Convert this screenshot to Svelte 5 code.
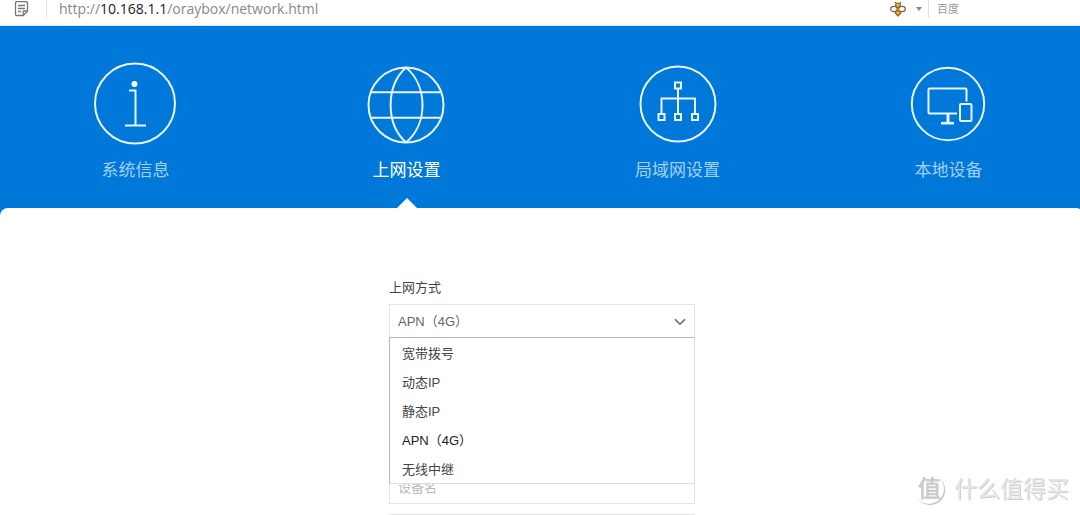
<script lang="ts">
	const tabs = [
		{ id: 'info', label: '系统信息' },
		{ id: 'wan', label: '上网设置' },
		{ id: 'lan', label: '局域网设置' },
		{ id: 'device', label: '本地设备' }
	];

	const modes = ['宽带拨号', '动态IP', '静态IP', 'APN（4G）', '无线中继'];

	let active = $state('wan');
	let mode = $state('APN（4G）');
	let open = $state(true);
	let deviceName = $state('');
	let apn = $state('');

	function pick(value: string) {
		mode = value;
		open = false;
	}

	function toggle(e: MouseEvent) {
		e.preventDefault();
		open = !open;
	}
</script>

<div class="page">
	<div class="address-bar">
		<svg class="doc" width="16" height="18" viewBox="0 0 16 18" fill="none" stroke="#777" stroke-width="1.3">
			<path d="M2.500 1.700h10q1 0 1 1v8.300l-4.300 4.500H2.500q-1 0-1-1V2.700q0-1 1-1z" />
			<path d="M13.500 11H10q-.8 0-.8.8v3.700M4 5.500h7M4 8.500h7M4 11.500h3" />
		</svg>
		<span class="url">http://<b>10.168.1.1</b>/oraybox/network.html</span>
		<svg class="bee" width="16" height="16" viewBox="0 0 16 16" fill="none" stroke="#8a5a3c" stroke-width="1.2">
			<path d="M5 1 6.500 3M11 1 9.500 3" />
			<circle cx="8" cy="4.300" r="2.300" fill="#fb0" />
			<path d="M5 10h6q0 2.500-3 5-3-2.500-3-5z" fill="#fb0" />
			<ellipse cx="4" cy="8" rx="3.300" ry="2.700" fill="#fff" />
			<ellipse cx="12" cy="8" rx="3.300" ry="2.700" fill="#fff" />
		</svg>
		<span class="caret"></span>
		<span class="engine">百度</span>
	</div>

	<nav class="tabs">
		{#each tabs as tab (tab.id)}
			<button class="tab" class:active={active === tab.id} onclick={() => (active = tab.id)}>
				<svg width="84" height="84" viewBox="0 0 84 84" fill="none" stroke="#e8f4ff" stroke-width="2">
					{#if tab.id === 'info'}
						<circle cx="41" cy="41.500" r="40" />
						<circle cx="40.500" cy="22" r="3" fill="#fff" stroke="none" />
						<path d="M35 28.500h6.500V63.500M31 63.500h21" />
					{:else if tab.id === 'wan'}
						<circle cx="41" cy="43" r="37.500" />
						<path d="M41 5.500C20.500 24 20.500 62 41 80.500M41 5.500C63 24 63 62 41 80.500M6.500 30.200h69M6.500 55.700h69" />
					{:else if tab.id === 'lan'}
						<circle cx="42" cy="42" r="37.500" />
						<path d="M39 20.500h6v6h-6zM22.500 52h6v6h-6zM39 52h6v6h-6zM56 52h6v6h-6z" />
						<path d="M42 27v25M25.500 52V36.500H59V52" />
					{:else}
						<circle cx="41" cy="42" r="36.200" />
						<path d="M59.500 39.500V27.500q0-1-1-1H22.500q-1 0-1 1V50.500q0 1 1 1H50" />
						<path d="M41 51.500v9" stroke-width="3" />
						<path d="M34 61.200h13" stroke-width="2.600" />
						<rect x="53" y="42" width="11.500" height="17" rx="1" />
					{/if}
				</svg>
				<span>{tab.label}</span>
			</button>
		{/each}
	</nav>

	<main class="panel">
		<form class="form">
			<label class="title" for="mode">上网方式</label>
			<div class="dropdown">
				<select id="mode" class="field" bind:value={mode} onmousedown={toggle}>
					{#each modes as m (m)}
						<option>{m}</option>
					{/each}
				</select>
				<svg class="chevron" width="12" height="8" viewBox="0 0 12 8" fill="none" stroke="#666" stroke-width="1.600">
					<path d="M1 1.200l5 5 5-5" />
				</svg>
				{#if open}
					<div class="menu">
						{#each modes as m (m)}
							<button type="button" class="option" class:current={m === mode} onclick={() => pick(m)}>{m}</button>
						{/each}
					</div>
				{/if}
			</div>
			<input class="field" aria-label="设备名" placeholder="设备名" bind:value={deviceName} />
			<input class="field" aria-label="APN" bind:value={apn} />
		</form>
	</main>

	<div class="watermark">
		<span class="seal">值</span>
		<span>什么值得买</span>
	</div>
</div>

<style>
	:global(html) {
		scrollbar-width: none;
	}

	.page {
		font-family: 'Liberation Sans', 'Noto Sans CJK SC', sans-serif;
		font-size: 13px;
		color: #444;
		background: #0078d9;
		overflow: hidden;
	}

	.address-bar {
		display: flex;
		align-items: center;
		height: 18px;
		padding-bottom: 7px;
		border-bottom: 1px solid #e4e4e4;
		background: #fff;
	}

	.doc {
		margin: 0 16px 0 14px;
	}

	.url {
		flex: 1;
		padding-left: 12px;
		border-left: 1px solid #e0e0e0;
		font-family: 'Open Sans', sans-serif;
		font-size: 14px;
		line-height: 18px;
		color: #888;
	}

	.url b {
		font-weight: 400;
		color: #222;
	}

	.caret {
		margin: 0 6px 0 10px;
		border: 3px solid transparent;
		border-top: 4px solid #888;
		border-bottom: 0;
	}

	.engine {
		width: 152px;
		padding-left: 8px;
		border-left: 1px solid #e0e0e0;
		box-sizing: border-box;
		font-size: 11px;
		line-height: 18px;
		color: #999;
	}

	/* the router page is slightly wider than the window */
	.tabs {
		display: grid;
		grid-template-columns: repeat(4, 1fr);
		margin-right: -4px;
	}

	.tab {
		position: relative;
		display: flex;
		flex-direction: column;
		align-items: center;
		gap: 13px;
		height: 182px;
		padding: 36px 0 0;
		border: 0;
		background: none;
		font: inherit;
		font-size: 17px;
		line-height: 24px;
		color: #a3d0f3;
		cursor: pointer;
	}

	.tab.active {
		color: #fff;
	}

	.tab.active::after {
		content: '';
		position: absolute;
		bottom: 0;
		border: 10px solid transparent;
		border-top: 0;
		border-bottom-color: #fff;
	}

	.panel {
		margin-right: -4px;
		padding: 68px 0 40px;
		border-radius: 8px 8px 0 0;
		background: #fff;
	}

	.form {
		display: flex;
		flex-direction: column;
		width: 306px;
		margin: 0 auto;
	}

	.title {
		margin-bottom: 4px;
		line-height: 24px;
	}

	.dropdown {
		position: relative;
		margin-bottom: 132px;
	}

	.field {
		display: block;
		width: 100%;
		height: 34px;
		margin: 0 0 10px;
		padding: 0 8px;
		border: 1px solid #e4e4e4;
		border-radius: 0;
		box-sizing: border-box;
		background: #fff;
		appearance: none;
		outline: none;
		font: inherit;
		color: #666;
	}

	.dropdown .field {
		margin: 0;
	}

	.field::placeholder {
		color: #bbb;
		opacity: 1;
	}

	.chevron {
		position: absolute;
		top: 14px;
		right: 9px;
		pointer-events: none;
	}

	.menu {
		position: absolute;
		top: 33px;
		left: 0;
		right: 0;
		z-index: 1;
		border: 1px solid #ddd;
		border-top-color: #b8b8b8;
		border-left-color: #b8b8b8;
		background: #fff;
	}

	.option {
		display: block;
		width: 100%;
		height: 29px;
		padding: 0 12px;
		border: 0;
		background: none;
		font: inherit;
		text-align: left;
		color: #444;
	}

	.option.current {
		color: #222;
	}

	.watermark {
		position: fixed;
		right: 11px;
		bottom: 9px;
		display: flex;
		align-items: center;
		gap: 10px;
		font-size: 23px;
		line-height: 34px;
		color: #e6e6e6;
		text-shadow: 1px 1px 0 #d0d0d0;
		pointer-events: none;
	}

	.seal {
		width: 30px;
		height: 30px;
		border-radius: 50%;
		box-shadow: 1px 1px 1px #bbb;
		line-height: 28px;
		text-align: center;
		color: #ccc;
	}
</style>
